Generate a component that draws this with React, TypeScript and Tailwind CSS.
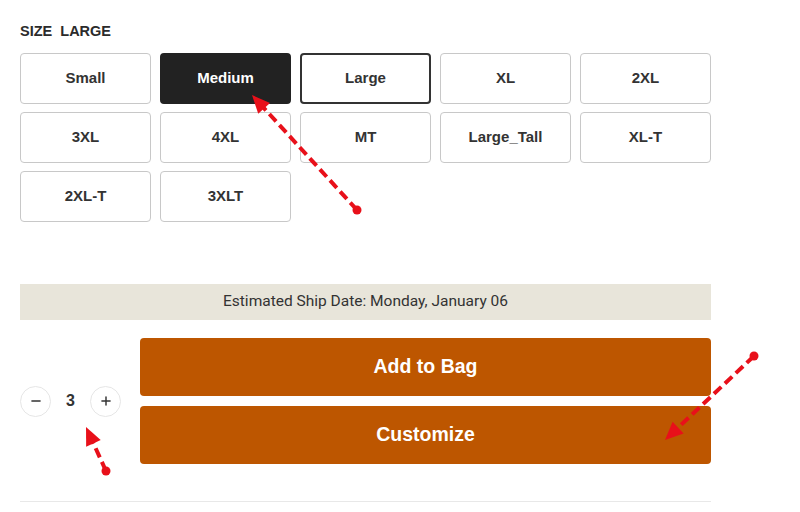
import { Minus, Plus } from 'lucide-react';

const sizes = ['Small', 'Medium', 'Large', 'XL', '2XL', '3XL', '4XL', 'MT', 'Large_Tall', 'XL-T', '2XL-T', '3XLT'];

function Arrow({ from, to }: { from: [number, number]; to: [number, number] }) {
  const [x1, y1] = from;
  const [x2, y2] = to;
  const dx = x2 - x1;
  const dy = y2 - y1;
  const len = Math.hypot(dx, dy);
  const ux = dx / len;
  const uy = dy / len;
  const head = 18;
  const half = 8;
  const bx = x2 - ux * head;
  const by = y2 - uy * head;
  const pts = `${x2},${y2} ${bx - uy * half},${by + ux * half} ${bx + uy * half},${by - ux * half}`;
  return (
    <g>
      <circle cx={x1} cy={y1} r={4.5} fill="#e8101a" />
      <line x1={x1} y1={y1} x2={bx + ux * 2} y2={by + uy * 2} stroke="#e8101a" strokeWidth={4} strokeDasharray="10 5" />
      <polygon points={pts} fill="#e8101a" />
    </g>
  );
}

export default function App() {
  return (
    <div className="relative h-[512px] w-[800px] overflow-hidden bg-white font-['Liberation_Sans',Arial,sans-serif] text-[#333]">
      <div className="w-[731px] px-5 pt-[23px]">
        <p className="text-[14.5px] font-bold leading-[16px] text-[#2b2b2b]">
          SIZE&nbsp;&nbsp;LARGE
        </p>

        <div className="mt-[14px] grid grid-cols-5 gap-x-[9px] gap-y-2">
          {sizes.map((s) => (
            <button
              key={s}
              className={
                s === 'Medium'
                  ? 'flex h-[51px] items-center justify-center rounded-[4px] border-2 border-[#222] bg-[#222] text-[15px] font-bold text-white'
                  : s === 'Large'
                    ? 'flex h-[51px] items-center justify-center rounded-[4px] border-2 border-[#333] bg-white text-[15px] font-bold text-[#333]'
                    : 'flex h-[51px] items-center justify-center rounded-[4px] border border-[#c8c8c8] bg-white text-[15px] font-bold text-[#333]'
              }
            >
              {s}
            </button>
          ))}
        </div>

        <div className="mt-[62px] flex h-[36px] items-center justify-center bg-[#e8e5da] font-['Roboto',sans-serif] text-[15.5px] text-[#333]">
          Estimated Ship Date: Monday, January 06
        </div>

        <div className="mt-[18px] flex items-center">
          <div className="flex w-[120px] items-center">
            <button className="flex h-[31px] w-[31px] items-center justify-center rounded-full border border-[#e6e6e6] text-[#333]">
              <Minus size={14} strokeWidth={2.5} />
            </button>
            <span className="w-[39px] text-center text-[16px] font-bold">3</span>
            <button className="flex h-[31px] w-[31px] items-center justify-center rounded-full border border-[#e6e6e6] text-[#333]">
              <Plus size={14} strokeWidth={2.5} />
            </button>
          </div>
          <div className="flex flex-1 flex-col gap-[10px]">
            <button className="h-[58px] rounded-[4px] bg-[#bd5600] text-[19.5px] font-bold text-white">Add to Bag</button>
            <button className="h-[58px] rounded-[4px] bg-[#bd5600] text-[19.5px] font-bold text-white">Customize</button>
          </div>
        </div>

        <div className="mt-[37px] h-px bg-[#e8e8e8]" />
      </div>

      <svg className="pointer-events-none absolute inset-0" width={800} height={512}>
        <Arrow from={[357, 210]} to={[252, 95]} />
        <Arrow from={[754, 356]} to={[665, 440]} />
        <Arrow from={[106, 471]} to={[86, 427]} />
      </svg>
    </div>
  );
}
